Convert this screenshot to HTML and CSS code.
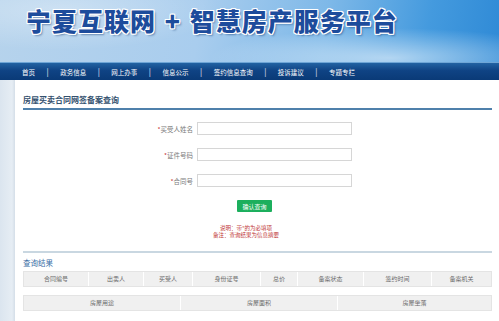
FILE: index.html
```html
<!DOCTYPE html>
<html>
  <head>
    <title>宁夏互联网 + 智慧房产服务平台</title>
    <meta charset="utf-8" />
    <meta name="viewport" content="width=device-width" />
    <link rel="stylesheet" href="styles.css">
  </head>

  <body>
    <div class="header">
      <h1 class="site_title">宁夏互联网 + 智慧房产服务平台</h1>
    </div>
    <div class="nav">
      <a href="#">首页</a><span class="sep">|</span>
      <a href="#">政务信息</a><span class="sep">|</span>
      <a href="#">网上办事</a><span class="sep">|</span>
      <a href="#">信息公示</a><span class="sep">|</span>
      <a href="#">签约信息查询</a><span class="sep">|</span>
      <a href="#">投诉建议</a><span class="sep">|</span>
      <a href="#">专题专栏</a>
    </div>
    <div class="page">
      <div class="side_strip"></div>
      <div class="content">
        <div class="page_title">房屋买卖合同网签备案查询</div>

        <div class="form">
          <div class="form_row">
            <label class="form_label"><span class="star">*</span>买受人姓名</label>
            <input class="text_input" type="text" />
          </div>
          <div class="form_row">
            <label class="form_label"><span class="star">*</span>证件号码</label>
            <input class="text_input" type="text" />
          </div>
          <div class="form_row">
            <label class="form_label"><span class="star">*</span>合同号</label>
            <input class="text_input" type="text" />
          </div>
          <div class="button_row">
            <input class="button" type="button" value="确认查询" />
          </div>
          <div class="notes">
            说明：带*的为必填项<br />
            备注：查询结果为信息摘要
          </div>
        </div>

        <div class="result_title">查询结果</div>
        <div class="result_row row_main">
          <div class="cell">合同编号</div>
          <div class="cell">出卖人</div>
          <div class="cell">买受人</div>
          <div class="cell">身份证号</div>
          <div class="cell">总价</div>
          <div class="cell">备案状态</div>
          <div class="cell">签约时间</div>
          <div class="cell">备案机关</div>
        </div>
        <div class="result_row row_house">
          <div class="cell">房屋用途</div>
          <div class="cell">房屋面积</div>
          <div class="cell">房屋坐落</div>
        </div>
      </div>
    </div>
  </body>
</html>
```

FILE: styles.css
```css
* {
  margin: 0;
  padding: 0;
}

input {
  margin: 0;
  padding: 0;
  appearance: none;
  -webkit-appearance: none;
}

body {
  background-color: #ffffff;
  font-family: "Noto Sans CJK SC", "Noto Sans", sans-serif;
  overflow: hidden;
}

.header {
  height: 62px;
  box-sizing: border-box;
  padding-top: 7px;
  padding-left: 26px;
  background:
    radial-gradient(ellipse 180px 30px at 390px 58px, rgba(255, 255, 255, 0.55), rgba(255, 255, 255, 0)),
    radial-gradient(ellipse 160px 40px at 60px 10px, rgba(255, 255, 255, 0.35), rgba(255, 255, 255, 0)),
    linear-gradient(100deg, #b6d3ec 0%, #a9cdee 40%, #7db8e8 65%, #449ade 85%, #2f8ad6 100%);
}

.site_title {
  font-size: 25px;
  line-height: 26px;
  font-weight: 900;
  color: #1d4c9c;
  letter-spacing: 1px;
  word-spacing: 2px;
  text-shadow:
    1px 0 #fff, -1px 0 #fff, 0 1px #fff, 0 -1px #fff,
    1px 1px #fff, -1px -1px #fff, 1px -1px #fff, -1px 1px #fff,
    2px 2px 2px rgba(10, 50, 110, 0.45);
}

.nav {
  height: 18px;
  display: flex;
  align-items: center;
  gap: 11.5px;
  padding-left: 22px;
  background: linear-gradient(#2263a3, #0f4384 45%, #0a3a77);
  border-top: 1px solid #6fa6d6;
  box-sizing: border-box;
}

.nav a {
  color: #ffffff;
  font-size: 6.5px;
  text-decoration: none;
}

.sep {
  color: #e6eef8;
  font-size: 8px;
}

.page {
  display: flex;
}

.side_strip {
  width: 15px;
  min-height: 241px;
  background: linear-gradient(90deg, #dbe5ef, #e6edf4 80%, #d4dee8);
}

.content {
  flex: 1;
  padding: 0 7px 0 8px;
}

.page_title {
  margin-top: 15px;
  padding-bottom: 3px;
  font-size: 8px;
  line-height: 10px;
  font-weight: bold;
  color: #33506e;
  border-bottom: 2px solid #4f80ab;
}

.form {
  padding-top: 12px;
  border-bottom: 2px solid #c9d7e1;
  padding-bottom: 12px;
}

.form_row {
  display: grid;
  grid-template-columns: 170px 155px;
  column-gap: 4px;
  align-items: center;
  margin-bottom: 13px;
}

.form_label {
  text-align: right;
  font-size: 6.5px;
  color: #7a7a7a;
}

.star {
  color: #c83232;
}

.text_input {
  height: 13px;
  box-sizing: border-box;
  border: 1px solid #d6d6d6;
  background-color: #ffffff;
}

.button_row {
  display: flex;
  padding-left: 214px;
  margin-top: 2px;
}

.button {
  width: 35px;
  height: 12px;
  background-color: #1caf5d;
  color: #ffffff;
  font-family: "Noto Sans CJK SC", sans-serif;
  font-size: 6px;
  border: none;
  border-radius: 1px;
}

.notes {
  margin-top: 13px;
  padding-right: 23px;
  text-align: center;
  font-size: 5.5px;
  line-height: 7px;
  color: #c03535;
}

.result_title {
  margin-top: 5px;
  font-size: 7.5px;
  line-height: 10px;
  color: #3a6ea6;
}

.result_row {
  display: grid;
  height: 16px;
  background-color: #f0f0f0;
  border: 1px solid #e4e4e4;
  box-sizing: border-box;
}

.row_main {
  margin-top: 3px;
  grid-template-columns: 65px 55px 49px 68px 37px 66px 68px 1fr;
}

.row_house {
  margin-top: 8px;
  grid-template-columns: 157px 157px 1fr;
}

.cell {
  font-size: 6px;
  line-height: 14px;
  color: #6a6a6a;
  text-align: center;
  border-right: 1px solid #ffffff;
}

.cell:last-child {
  border-right: none;
}
```
